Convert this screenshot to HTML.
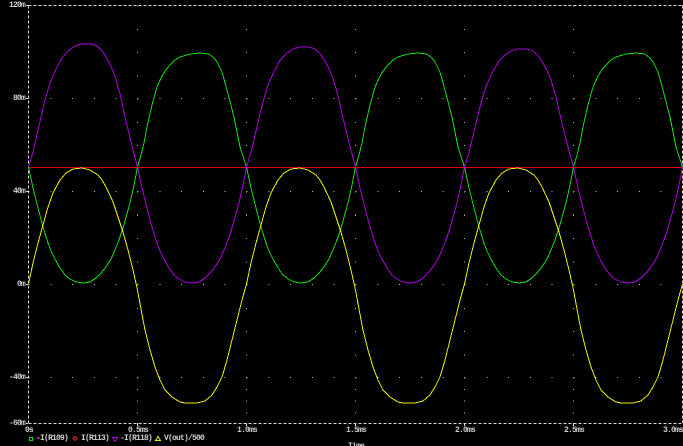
<!DOCTYPE html>
<html>
<head>
<meta charset="utf-8">
<style>
html,body{margin:0;padding:0;background:#000;}
#p{position:relative;width:683px;height:446px;overflow:hidden;background:#000;font-family:"Liberation Mono","DejaVu Sans Mono",monospace;}
.t{position:absolute;font-size:8px;line-height:8px;font-weight:bold;letter-spacing:-0.8px;color:#ccc;white-space:pre;}
svg{position:absolute;left:0;top:0;}
</style>
</head>
<body>
<div id="p">
<svg width="683" height="446" viewBox="0 0 683 446" shape-rendering="crispEdges">
<defs>
<polyline id="pu" fill="none" points="28.5,167 33.5,150 38,130 45,100 50,83 56,69 62,58 68,51 75,46 81,44 91,44 97,46 103,52 110,64 115,76 120,94 125,117 133,150 137.5,167"/>
<polyline id="gl" fill="none" points="28.5,167 33,188 38,208 43,227 48,243 51,251 55,259 60,268 65,275 70,279 76,282 83,283 90,282 96,278 101,273 106,267 111,259 115,250 119,240 123,228 130,203 134,185 137.5,167"/>
<polyline id="gu" fill="none" points="137.5,167 141,155 144,143 147,127 152,105 157,87 161,78 165,71 170,65 175,60 180,57 190,54 200,53 209,54 214,58 217,62 222,72 227,90 234,117 240,147 246.5,167"/>
<polyline id="y" fill="none" points="28.5,284 33,263 38,243 43,225 48,207 53,193 60,180 66,173 73,169 82,168 90,170 98,175 102,180 106,187 113,202 118,217 123,232 128,250 133,270 137.5,290 141,309 145,330 150,350 155,367 160,380 165,390 172,397 180,402 185,403 197,403 205,401 212,395 217,387 222,377 227,360 232,340 237,320 242,300 246.5,284"/>
</defs>
<!-- grid dots -->
<g stroke="#bbb" stroke-width="1" fill="none">
<path stroke-dasharray="1 20.8" d="M28.5 98.5H682M28.5 191.5H682M28.5 284.5H682M28.5 377.5H682"/>
<path stroke-dasharray="1 22.25" d="M137.5 5.5V377M246.5 5.5V377M355.5 5.5V377M464.5 5.5V377M573.5 5.5V377"/>
<path stroke-dasharray="1 10.6" d="M137.5 377.5V420M246.5 377.5V420M355.5 377.5V420M464.5 377.5V420M573.5 377.5V420"/>
</g>
<!-- axes -->
<g stroke="#ddd" stroke-width="1" fill="none">
<path stroke-dasharray="3 2" d="M28.5 5.5V423M682.5 5.5V423M28.5 5.5H683M28.5 423.5H683"/>
<path d="M26 5.5H28M26 98.5H28M26 191.5H28M26 284.5H28M26 377.5H28M26 423.5H28M137.5 423V426M246.5 423V426M355.5 423V426M464.5 423V426M573.5 423V426"/>
</g>
<!-- green -->
<g stroke="#11dd11" stroke-width="1">
<use href="#gl"/><use href="#gl" transform="translate(218 0)"/><use href="#gl" transform="translate(436 0)"/>
<use href="#gu"/><use href="#gu" transform="translate(218 0)"/><use href="#gu" transform="translate(436 0)"/>
</g>
<!-- red -->
<path d="M29 167.5H683" stroke="#e00000" stroke-width="1"/>
<!-- purple -->
<g stroke="#aa00dd" stroke-width="1">
<use href="#pu"/><use href="#pu" transform="matrix(1 0 0 .976 218 4)"/><use href="#pu" transform="matrix(1 0 0 .959 436 6.85)"/>
<use href="#gl" transform="translate(109 0)"/><use href="#gl" transform="translate(327 0)"/><use href="#gl" transform="translate(545 0)"/>
</g>
<!-- yellow -->
<g stroke="#eeee00" stroke-width="1">
<use href="#y"/><use href="#y" transform="translate(218 0)"/><use href="#y" transform="translate(436 0)"/>
</g>
<!-- legend markers -->
<rect x="29.5" y="437.5" width="3" height="3" fill="none" stroke="#11dd11" stroke-width="1"/>
<path d="M75 436.5L77 438.5L75 440.5L73 438.5Z" fill="none" stroke="#dd2222" stroke-width="1"/>
<path d="M112.5 437.5H117.5L115 441.5Z" fill="none" stroke="#aa00dd" stroke-width="1"/>
<path d="M155.5 440.5H160.5L158 436.5Z" fill="none" stroke="#eeee00" stroke-width="1"/>
</svg>
<div class="t" style="left:9px;top:2px;">120m</div>
<div class="t" style="left:13px;top:95px;">80m</div>
<div class="t" style="left:13px;top:188px;">40m</div>
<div class="t" style="left:17px;top:281px;">0m</div>
<div class="t" style="left:9px;top:374px;">-40m</div>
<div class="t" style="left:9px;top:420px;">-60m</div>
<div class="t" style="left:25px;top:427px;">0s</div>
<div class="t" style="left:128px;top:427px;">0.5ms</div>
<div class="t" style="left:237px;top:427px;">1.0ms</div>
<div class="t" style="left:346px;top:427px;">1.5ms</div>
<div class="t" style="left:455px;top:427px;">2.0ms</div>
<div class="t" style="left:564px;top:427px;">2.5ms</div>
<div class="t" style="left:663px;top:427px;">3.0ms</div>
<div class="t" style="left:36px;top:435px;">-I(R109)</div>
<div class="t" style="left:81px;top:435px;">I(R113)</div>
<div class="t" style="left:120px;top:435px;">-I(R118)</div>
<div class="t" style="left:164px;top:435px;">V(out)/500</div>
<div class="t" style="left:348px;top:443px;">Time</div>
</div>
</body>
</html>
